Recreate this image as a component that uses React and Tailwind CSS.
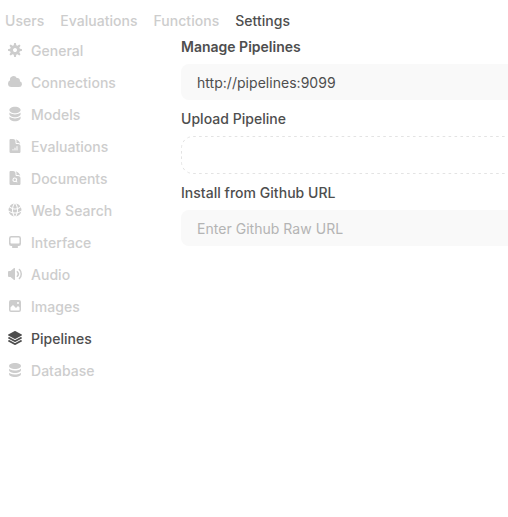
import React from 'react';
import {
  HiDocumentChartBar,
  HiDocumentMagnifyingGlass,
  HiGlobeAlt,
  HiSquare3Stack3D,
} from 'react-icons/hi2';

const Svg16 = ({ paths, box = 16 }) => (
  <svg viewBox={`0 0 ${box} ${box}`} fill="currentColor" className="size-4">
    {paths.map((d) => (
      <path key={d} fillRule="evenodd" clipRule="evenodd" d={d} />
    ))}
  </svg>
);

const cog = [
  'M6.955 1.45A.5.5 0 0 1 7.452 1h1.096a.5.5 0 0 1 .497.45l.17 1.699c.484.12.94.312 1.356.562l1.321-1.081a.5.5 0 0 1 .67.033l.774.775a.5.5 0 0 1 .034.67l-1.08 1.32c.25.417.44.873.561 1.357l1.699.17a.5.5 0 0 1 .45.497v1.096a.5.5 0 0 1-.45.497l-1.699.17c-.12.484-.312.94-.562 1.356l1.082 1.322a.5.5 0 0 1-.034.67l-.774.774a.5.5 0 0 1-.67.033l-1.322-1.08c-.416.25-.872.44-1.356.561l-.17 1.699a.5.5 0 0 1-.497.45H7.452a.5.5 0 0 1-.497-.45l-.17-1.699a4.973 4.973 0 0 1-1.356-.562L4.108 13.37a.5.5 0 0 1-.67-.033l-.774-.775a.5.5 0 0 1-.034-.67l1.08-1.32a4.971 4.971 0 0 1-.561-1.357l-1.699-.17A.5.5 0 0 1 1 8.548V7.452a.5.5 0 0 1 .45-.497l1.699-.17c.12-.484.312-.94.562-1.356L2.629 4.107a.5.5 0 0 1 .034-.67l.774-.774a.5.5 0 0 1 .67-.033L5.43 3.71a4.97 4.97 0 0 1 1.356-.561l.17-1.699ZM6 8c0 .538.212 1.026.558 1.385l.057.057a2 2 0 0 0 2.828-2.828l-.058-.056A2 2 0 0 0 6 8Z',
];
const cloud = [
  'M1 9.5A3.5 3.5 0 0 0 4.5 13H12a3 3 0 0 0 .917-5.857 2.503 2.503 0 0 0-3.198-3.019 3.5 3.5 0 0 0-6.628 2.171A3.5 3.5 0 0 0 1 9.5Z',
];
const models = [
  'M10 1c3.866 0 7 1.79 7 4s-3.134 4-7 4-7-1.79-7-4 3.134-4 7-4zm5.694 8.13c.464-.264.91-.583 1.306-.952V10c0 2.21-3.134 4-7 4s-7-1.79-7-4V8.178c.396.37.842.688 1.306.953C5.838 10.006 7.854 10.5 10 10.5s4.162-.494 5.694-1.37zM3 13.179V15c0 2.21 3.134 4 7 4s7-1.79 7-4v-1.822c-.396.37-.842.688-1.306.953-1.532.875-3.548 1.369-5.694 1.369s-4.162-.494-5.694-1.37A7.009 7.009 0 013 13.179z',
];
const desktop = [
  'M2 4.25A2.25 2.25 0 0 1 4.25 2h7.5A2.25 2.25 0 0 1 14 4.25v5.5A2.25 2.25 0 0 1 11.75 12h-1.312c.1.128.21.248.328.36a.75.75 0 0 1 .234.545v.345a.75.75 0 0 1-.75.75h-4.5a.75.75 0 0 1-.75-.75v-.345a.75.75 0 0 1 .234-.545c.118-.111.228-.232.328-.36H4.25A2.25 2.25 0 0 1 2 9.75v-5.5Zm2.25-.75a.75.75 0 0 0-.75.75v4.5c0 .414.336.75.75.75h7.5a.75.75 0 0 0 .75-.75v-4.5a.75.75 0 0 0-.75-.75h-7.5Z',
];
const speaker = [
  'M7.557 2.066A.75.75 0 0 1 8 2.75v10.5a.75.75 0 0 1-1.248.56L3.59 11H2a1 1 0 0 1-1-1V6a1 1 0 0 1 1-1h1.59l3.162-2.81a.75.75 0 0 1 .805-.124ZM12.95 3.05a.75.75 0 1 0-1.06 1.06 5.5 5.5 0 0 1 0 7.78.75.75 0 1 0 1.06 1.06 7 7 0 0 0 0-9.9Z',
  'M10.828 5.172a.75.75 0 1 0-1.06 1.06 2.5 2.5 0 0 1 0 3.536.75.75 0 1 0 1.06 1.06 4 4 0 0 0 0-5.656Z',
];
const photo = [
  'M2 4a2 2 0 0 1 2-2h8a2 2 0 0 1 2 2v8a2 2 0 0 1-2 2H4a2 2 0 0 1-2-2V4Zm10.5 5.707a.5.5 0 0 0-.146-.353l-1-1a.5.5 0 0 0-.708 0L9.354 9.646a.5.5 0 0 1-.708 0L6.354 7.354a.5.5 0 0 0-.708 0l-2 2a.5.5 0 0 0-.146.353V12a.5.5 0 0 0 .5.5h8a.5.5 0 0 0 .5-.5V9.707ZM12 5a1 1 0 1 1-2 0 1 1 0 0 1 2 0Z',
];
const database = [
  'M8 7c3.314 0 6-1.343 6-3s-2.686-3-6-3-6 1.343-6 3 2.686 3 6 3Z',
  'M8 8.5c1.84 0 3.579-.37 4.914-1.037A6.33 6.33 0 0 0 14 6.78V8c0 1.657-2.686 3-6 3S2 9.657 2 8V6.78c.346.273.72.5 1.087.683C4.42 8.131 6.16 8.5 8 8.5Z',
  'M8 12.5c1.84 0 3.579-.37 4.914-1.037.366-.183.74-.41 1.086-.684V12c0 1.657-2.686 3-6 3s-6-1.343-6-3v-1.22c.346.273.72.5 1.087.683C4.42 12.131 6.16 12.5 8 12.5Z',
];

const items = [
  ['General', <Svg16 paths={cog} />],
  ['Connections', <Svg16 paths={cloud} />],
  ['Models', <Svg16 paths={models} box={20} />],
  ['Evaluations', <HiDocumentChartBar className="size-4" />],
  ['Documents', <HiDocumentMagnifyingGlass className="size-4" />],
  ['Web Search', <HiGlobeAlt className="size-4" />],
  ['Interface', <Svg16 paths={desktop} />],
  ['Audio', <Svg16 paths={speaker} />],
  ['Images', <Svg16 paths={photo} />],
  ['Pipelines', <HiSquare3Stack3D className="size-4" />],
  ['Database', <Svg16 paths={database} />],
];

const tabs = ['Users', 'Evaluations', 'Functions', 'Settings'];

export default function App() {
  return (
    <div className="h-[517px] w-[508px] overflow-hidden bg-white font-['Inter',sans-serif] text-sm font-medium tracking-[0.03px] text-[#4e4e4e]">
      <nav className="flex gap-4 pt-[11px] pl-[5px]">
        {tabs.map((t) => (
          <button key={t} className={t === 'Settings' ? '' : 'text-[#cdcdcd]'}>
            {t}
          </button>
        ))}
      </nav>
      <div className="flex">
        <aside className="flex w-[181px] shrink-0 flex-col gap-3 pt-2.5 pl-[7px]">
          {items.map(([label, icon]) => (
            <button
              key={label}
              className={
                label === 'Pipelines'
                  ? 'flex items-center gap-2 text-left'
                  : 'flex items-center gap-2 text-left text-[#cdcdcd]'
              }
            >
              <span className="mb-0.5">{icon}</span>
              <span>{label}</span>
            </button>
          ))}
        </aside>
        <main className="flex w-[400px] shrink-0 flex-col pt-1.5">
          <h2 className="font-semibold tracking-normal">Manage Pipelines</h2>
          <div className="mt-[7px] flex h-9 items-center rounded-lg bg-[#f9f9f9] px-4 pt-0.5 font-normal">
            http://pipelines:9099
          </div>
          <h3 className="mt-[9px]">Upload Pipeline</h3>
          <div className="mt-[7px] h-[38px] rounded-xl">
            {/* Dashed outline of the drop area, mirrored around its left edge */}
            <svg
              width="400"
              height="38"
              fill="none"
              stroke="#e3e3e3"
              strokeDasharray="2.6 3.34"
              strokeDashoffset="-1.36"
              className="block"
            >
              <path d="M.5 19V12A11.5 11.5 0 0 1 12 .5H400" />
              <path d="M.5 19V26A11.5 11.5 0 0 0 12 37.5H400" />
            </svg>
          </div>
          <h3 className="mt-[9px]">Install from Github URL</h3>
          <input
            placeholder="Enter Github Raw URL"
            className="mt-[7px] h-9 rounded-lg bg-[#f9f9f9] px-4 font-normal tracking-[0.03px] placeholder:text-[#b4b4b4]"
          />
        </main>
      </div>
    </div>
  );
}
